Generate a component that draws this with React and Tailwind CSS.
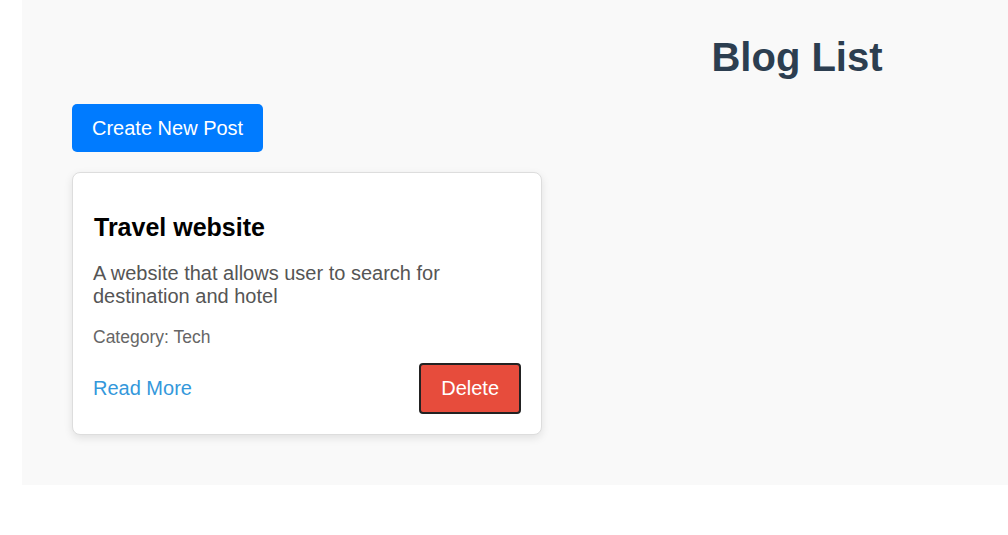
export default function App() {
  return (
    <div className="w-full overflow-hidden bg-white min-h-[535px]" style={{ fontFamily: '"Liberation Sans", Arial, sans-serif' }}>
      <div className="ml-[22px] w-[1550px] bg-[#f9f9f9] px-[50px] pt-[35px] pb-[50px]">
        <h1 className="text-center text-[40px] leading-[45px] font-bold text-[#2c3e50] mb-[24px]">Blog List</h1>
        <button className="h-[48px] px-[20px] bg-[#007bff] text-white text-[20px] leading-[23px] rounded-[5px] mb-[20px] block">
          Create New Post
        </button>
        <div className="w-[470px] bg-white border border-[#dddddd] rounded-[8px] shadow-[0_3px_8px_rgba(0,0,0,0.1)] px-[20px] pb-[20px] pt-[41px]">
          <h2 className="text-[25px] leading-[27px] font-bold text-black mb-[21px] ml-px">Travel website</h2>
          <p className="text-[20px] leading-[23px] text-[#555555] mb-[20px]">
            A website that allows user to search for destination and hotel
          </p>
          <p className="text-[17.5px] leading-[19px] text-[#666666] mb-[16px]">Category: Tech</p>
          <div className="flex items-center justify-between">
            <a className="text-[20px] leading-[23px] text-[#3498db] cursor-pointer">Read More</a>
            <button className="bg-[#e74c3c] text-white text-[20px] leading-[23px] px-[20px] py-[12px] border-2 border-[#222222] rounded-[4px]">
              Delete
            </button>
          </div>
        </div>
      </div>
    </div>
  );
}
